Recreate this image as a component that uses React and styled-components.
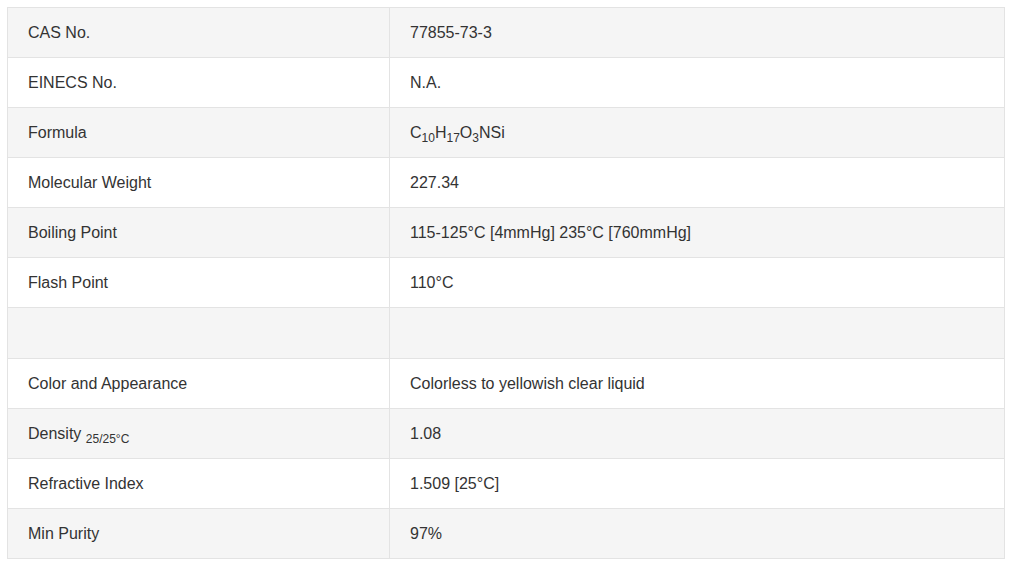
import React from "react";
import styled, { createGlobalStyle } from "styled-components";

const Global = createGlobalStyle`
  html, body { margin: 0; padding: 0; background: #fff; }
  body { font-family: "Liberation Sans", Arial, sans-serif; }
`;

const Page = styled.div`
  padding: 7px;
`;

const Table = styled.table`
  width: 998px;
  border-collapse: collapse;
  border: 1px solid #e3e3e3;
  font-size: 16px;
  color: #333;
`;

const Row = styled.tr`
  background: ${(p) => (p.$odd ? "#f5f5f5" : "#fff")};
`;

const Cell = styled.td`
  border: 1px solid #e3e3e3;
  padding: 0 20px;
  height: ${(p) => (p.$tall ? 51 : 50)}px;
  box-sizing: border-box;
  vertical-align: middle;
  width: ${(p) => (p.$label ? "382px" : "auto")};
  line-height: 18px;
`;

const Sub = styled.sub`
  font-size: 12px;
  vertical-align: -4px;
  line-height: 0;
`;

const rows = [
  ["CAS No.", "77855-73-3"],
  ["EINECS No.", "N.A."],
  [
    "Formula",
    <>
      C<Sub>10</Sub>H<Sub>17</Sub>O<Sub>3</Sub>NSi
    </>,
  ],
  ["Molecular Weight", "227.34"],
  ["Boiling Point", "115-125°C [4mmHg] 235°C [760mmHg]"],
  ["Flash Point", "110°C"],
  ["", ""],
  ["Color and Appearance", "Colorless to yellowish clear liquid"],
  [
    <>
      Density <Sub>25/25°C</Sub>
    </>,
    "1.08",
  ],
  ["Refractive Index", "1.509 [25°C]"],
  ["Min Purity", "97%"],
];

export default function App() {
  return (
    <>
      <Global />
      <Page>
        <Table>
          <tbody>
            {rows.map(([k, v], i) => (
              <Row key={i} $odd={i % 2 === 0}>
                <Cell $label $tall={k === ""}>{k}</Cell>
                <Cell $tall={k === ""}>{v}</Cell>
              </Row>
            ))}
          </tbody>
        </Table>
      </Page>
    </>
  );
}
